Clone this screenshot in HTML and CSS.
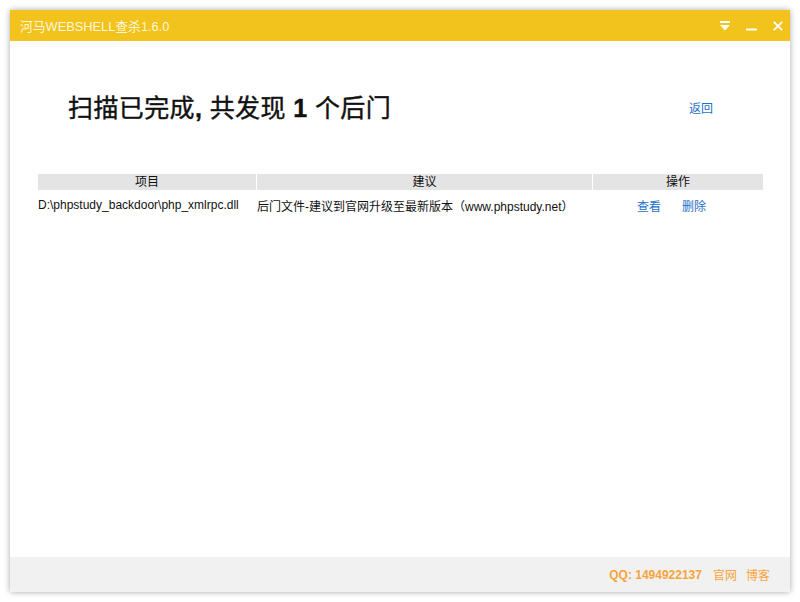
FILE: index.html
```html
<!DOCTYPE html>
<html>
<head>
<meta charset="utf-8">
<link rel="stylesheet" href="styles.css">
</head>
<body>
<div class="window">
  <div class="titlebar">
    <span class="title">河马WEBSHELL查杀1.6.0</span>
    <div class="controls">
      <svg class="ico" width="10" height="10" viewBox="0 0 10 10"><rect x="0" y="0" width="10" height="2" fill="#fff"/><polygon points="0,4 10,4 5,9.5" fill="#fff"/></svg>
      <svg class="ico" width="11" height="10" viewBox="0 0 11 10"><rect x="0" y="7.5" width="11" height="2" fill="#fff"/></svg>
      <svg class="ico" width="10" height="10" viewBox="0 0 10 10"><path d="M0.8 0.8 L9.2 9.2 M9.2 0.8 L0.8 9.2" stroke="#fff" stroke-width="1.8"/></svg>
    </div>
  </div>
  <div class="content">
    <div class="head">
      <h1>扫描已完成<b>,</b> 共发现 <b>1</b> 个后门</h1>
      <a class="link back">返回</a>
    </div>
    <div class="table">
      <div class="row hdr">
        <div class="c1">项目</div>
        <div class="c2">建议</div>
        <div class="c3">操作</div>
      </div>
      <div class="row data">
        <div class="c1">D:\phpstudy_backdoor\php_xmlrpc.dll</div>
        <div class="c2">后门文件-建议到官网升级至最新版本（www.phpstudy.net）</div>
        <div class="c3 ops"><a class="link">查看</a><a class="link">删除</a></div>
      </div>
    </div>
  </div>
  <div class="footer">
    <span class="qq">QQ: 1494922137</span>
    <span>官网</span>
    <span>博客</span>
  </div>
</div>
</body>
</html>
```
FILE: styles.css
```css
html, body { margin: 0; padding: 0; background: #fff; }
* { box-sizing: border-box; }
body { width: 800px; height: 602px; padding: 10px; font-family: "Liberation Sans", Arial, "Noto Sans CJK SC", sans-serif; }
.window { width: 780px; height: 582px; display: flex; flex-direction: column; background: #fff; box-shadow: 0 0 6px rgba(0,0,0,0.35); }
.titlebar { height: 31px; background: #f2c21d; display: flex; align-items: center; justify-content: space-between; padding: 0 7px 0 10px; flex-shrink: 0; }
.title { color: #fff6dc; font-size: 12.8px; }
.controls { display: flex; gap: 16px; align-items: center; }
.ico { display: block; }
.content { flex: 1; padding: 0 28px; }
.head { display: flex; justify-content: space-between; align-items: center; height: 68px; margin-top: 31px; padding: 0 48px 0 30px; }
h1 { margin: 0; font-size: 25px; font-weight: normal; color: #111; letter-spacing: 0.4px; -webkit-text-stroke: 0.4px #111; }
h1 b { font-weight: bold; }
.link { color: #2470c8; font-size: 12px; cursor: pointer; }
.back { margin-top: 3px; margin-right: 1px; }
.table { margin-top: 34px; font-size: 12px; color: #111; }
.row { display: flex; }
.row > div { flex-shrink: 0; white-space: nowrap; }
.hdr { height: 16px; align-items: center; }
.hdr > div { background: #e4e4e4; text-align: center; height: 16px; line-height: 16px; }
.hdr .c1, .hdr .c2 { margin-right: 1px; }
.c1 { width: 218px; }
.c2 { width: 335px; }
.c3 { width: 170px; }
.data { height: 30px; align-items: center; }
.data .c1 { text-align: left; }
.data .c2 { padding-left: 1px; }
.ops { display: flex; gap: 21px; padding-left: 46px; }
.footer { height: 35px; background: #f1f1f1; display: flex; justify-content: flex-end; align-items: center; gap: 9px; padding-right: 20px; color: #f7a43a; font-size: 12px; flex-shrink: 0; }
.qq { font-weight: bold; margin-right: 2px; }
```
